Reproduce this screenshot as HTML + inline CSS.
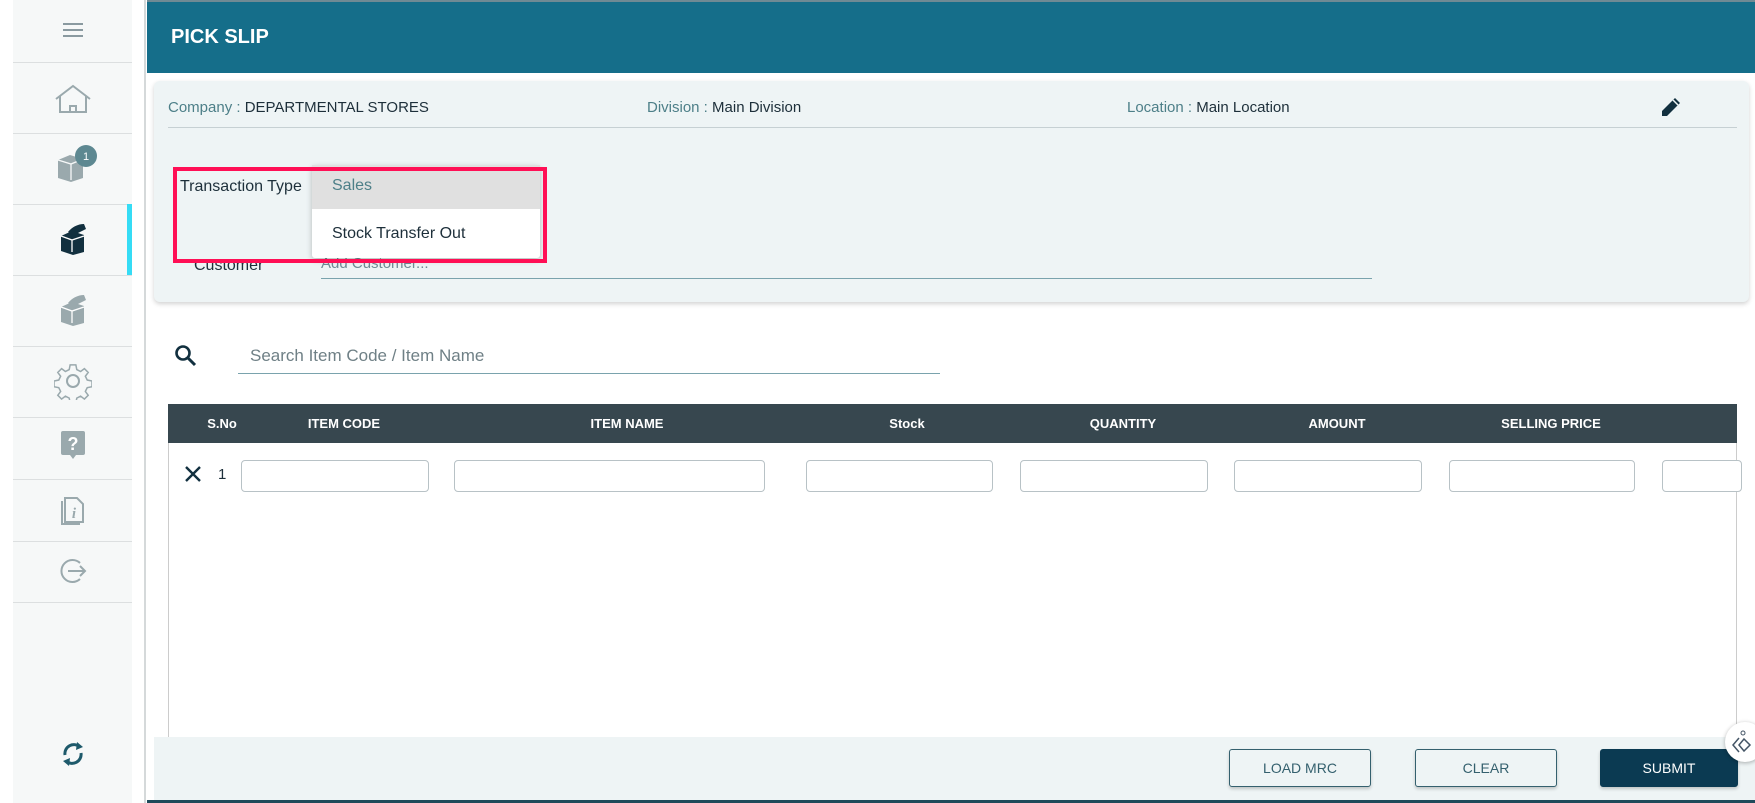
<!DOCTYPE html>
<html><head><meta charset="utf-8"><style>
*{box-sizing:border-box;margin:0;padding:0}
body{width:1755px;height:803px;overflow:hidden;background:#fff;font-family:"Liberation Sans",Arial,sans-serif;position:relative;color:#1d2f3a}
.abs{position:absolute}
.side{left:0;top:0;width:146px;height:803px;background:#fff;border-right:2px solid #d5d9da}
.sbg{left:13px;top:0;width:119px;height:803px;background:#f6f8f8}
.div{left:13px;width:119px;height:1px;background:#dcdfe0}
.ico{left:73px;transform:translate(-50%,-50%)}
.hdr{left:147px;top:0;width:1608px;height:73px;background:#156e8a;border-top:2px solid #6f8a94}
.hdr span{position:absolute;left:24px;top:24px;color:#fff;font-weight:bold;font-size:20px}
.card{left:154px;top:81px;width:1595px;height:221px;background:#eef4f5;border-radius:6px;box-shadow:0 2px 5px rgba(0,0,0,.18)}
.lbl{color:#4d7f88;font-size:15px}
.val{color:#1d2f3a;font-size:15px}
.th{top:404px;height:39px;background:#37474f;left:168px;width:1569px}
.th div{position:absolute;top:12px;color:#fff;font-weight:bold;font-size:13px;transform:translateX(-50%);white-space:nowrap}
.inp{top:460px;height:32px;border:1px solid #b8c2c6;border-radius:4px;background:#fff}
.btn{top:749px;height:38px;border:1px solid #34606e;border-radius:3px;background:#eef4f5;color:#34606e;font-size:14px;text-align:center;line-height:36px;box-shadow:0 2px 3px rgba(0,0,0,.2)}
</style></head><body>
<div class="abs side"></div><div class="abs sbg"></div>
<div class="abs div" style="top:62px"></div><div class="abs div" style="top:133px"></div><div class="abs div" style="top:204px"></div><div class="abs div" style="top:275px"></div><div class="abs div" style="top:346px"></div><div class="abs div" style="top:417px"></div><div class="abs div" style="top:479px"></div><div class="abs div" style="top:541px"></div><div class="abs div" style="top:602px"></div>
<div class="abs" style="left:127px;top:204px;width:5px;height:71px;background:#35dcf5"></div>
<svg class="abs ico" style="top:30px" width="22" height="16"><path d="M1 2h20M1 8h20M1 14h20" stroke="#8a9aa0" stroke-width="2"/></svg>
<svg class="abs ico" style="top:99px" width="40" height="30"><path d="M3 15L20 2L37 15M7 12v16h26V12M17 28v-6h6v6" stroke="#9aa9ad" stroke-width="2" fill="none"/></svg>
<svg class="abs ico" style="top:164px;left:78px" width="44" height="40"><path d="M2 16l12-5 13 4v19l-12 4-13-4z" fill="#9aa9ad"/><path d="M15 20v16M2 16l13 4 12-5" stroke="#f6f8f8" stroke-width="1.3" fill="none"/><circle cx="30" cy="12" r="11" fill="#5d8891"/><text x="30" y="16" fill="#fff" font-size="11" text-anchor="middle" font-family="Liberation Sans">1</text></svg>
<svg class="abs ico" style="top:239px" width="30" height="34"><path d="M3 14l11-5 12 4v17l-11 3-12-4z" fill="#12303f"/><path d="M10 10c4-5 10-8 16-8l2 5-12 6z" fill="#12303f"/><path d="M14 18v12M3 14l11 4 12-4" stroke="#fff" stroke-width="1.3" fill="none"/></svg>
<svg class="abs ico" style="top:310px" width="30" height="34"><path d="M3 14l11-5 12 4v17l-11 3-12-4z" fill="#9aa9ad"/><path d="M10 10c4-5 10-8 16-8l2 5-12 6z" fill="#9aa9ad"/><path d="M14 18v12M3 14l11 4 12-4" stroke="#fff" stroke-width="1.3" fill="none"/></svg>
<svg class="abs ico" style="top:381px" width="38" height="38"><circle cx="19" cy="19" r="6" stroke="#9aa9ad" stroke-width="2" fill="none"/><path d="M16 3h6l1 5 4 2 4-3 4 4-3 4 2 4 5 1v6l-5 1-2 4 3 4-4 4-4-3-4 2-1 5h-6l-1-5-4-2-4 3-4-4 3-4-2-4-5-1v-6l5-1 2-4-3-4 4-4 4 3 4-2z" transform="scale(.95) translate(1 0)" stroke="#9aa9ad" stroke-width="1.6" fill="none"/></svg>
<svg class="abs ico" style="top:445px" width="26" height="30"><rect x="1" y="1" width="24" height="24" rx="2" fill="#9aa9ad"/><path d="M10 25l3 4 3-4z" fill="#9aa9ad"/><text x="13" y="20" fill="#fff" font-size="18" font-weight="bold" text-anchor="middle" font-family="Liberation Sans">?</text></svg>
<svg class="abs ico" style="top:510px" width="28" height="32"><path d="M6 4h12l6 6v18H6z" stroke="#9aa9ad" stroke-width="2" fill="none"/><path d="M3 7v23h18" stroke="#9aa9ad" stroke-width="2" fill="none"/><text x="15" y="24" fill="#9aa9ad" font-size="15" font-style="italic" font-weight="bold" text-anchor="middle" font-family="Liberation Serif">i</text></svg>
<svg class="abs ico" style="top:571px" width="30" height="30"><path d="M22 7A11 11 0 1 0 22 23" stroke="#9aa9ad" stroke-width="2" fill="none"/><path d="M10 15h17M22 10l5 5-5 5" stroke="#9aa9ad" stroke-width="2" fill="none"/></svg>
<svg class="abs ico" style="top:754px" width="26" height="28"><path d="M5 15A9 9 0 0 1 20 7M21 13A9 9 0 0 1 6 21" stroke="#1e5a6b" stroke-width="3" fill="none"/><path d="M17 2l6 5-7 3zM9 26l-6-5 7-3z" fill="#1e5a6b"/></svg>

<div class="abs hdr"><span>PICK SLIP</span></div>
<div class="abs card"></div>
<div class="abs" style="left:168px;top:99px"><span class="lbl">Company : </span><span class="val">DEPARTMENTAL STORES</span></div>
<div class="abs" style="left:647px;top:99px"><span class="lbl">Division : </span><span class="val">Main Division</span></div>
<div class="abs" style="left:1127px;top:99px"><span class="lbl">Location : </span><span class="val">Main Location</span></div>
<svg class="abs" style="left:1660px;top:96px" width="22" height="22"><path d="M2 20v-5L15 2l5 5L7 20z" fill="#12303f"/><path d="M13 4l5 5" stroke="#eef4f5" stroke-width="1.5"/></svg>
<div class="abs" style="left:168px;top:127px;width:1569px;height:1px;background:#c6d0d3"></div>
<div class="abs val" style="left:180px;top:178px;font-size:16px">Transaction Type</div>
<div class="abs val" style="left:194px;top:257px;font-size:16px">Customer</div>
<div class="abs" style="left:321px;top:255px;color:#6f8a94;font-size:15px">Add Customer...</div>
<div class="abs" style="left:321px;top:278px;width:1051px;height:1px;background:#7aa3ad"></div>
<div class="abs" style="left:312px;top:165px;width:228px;height:93px;background:#fff;border-radius:3px;box-shadow:0 2px 6px rgba(0,0,0,.25)"></div>
<div class="abs" style="left:312px;top:165px;width:228px;height:44px;background:#e0e0e0"></div>
<div class="abs" style="left:332px;top:177px;color:#4d7f88;font-size:16px">Sales</div>
<div class="abs val" style="left:332px;top:225px;font-size:16px">Stock Transfer Out</div>
<div class="abs" style="left:173px;top:167px;width:374px;height:96px;border:4px solid #ff0f55"></div>

<svg class="abs" style="left:174px;top:344px" width="24" height="24"><circle cx="9" cy="9" r="6.5" stroke="#12303f" stroke-width="2.6" fill="none"/><path d="M14 14l7 7" stroke="#12303f" stroke-width="3"/></svg>
<div class="abs" style="left:250px;top:346px;color:#6f8086;font-size:17px">Search Item Code / Item Name</div>
<div class="abs" style="left:238px;top:373px;width:702px;height:1px;background:#7aa3ad"></div>

<div class="abs" style="left:168px;top:404px;width:1569px;height:334px;background:#fff;border-left:1px solid #ccc;border-right:1px solid #ccc"></div>
<div class="abs th">
<div style="left:54px">S.No</div><div style="left:176px">ITEM CODE</div><div style="left:459px">ITEM NAME</div><div style="left:739px">Stock</div><div style="left:955px">QUANTITY</div><div style="left:1169px">AMOUNT</div><div style="left:1383px">SELLING PRICE</div>
</div>
<svg class="abs" style="left:184px;top:465px" width="18" height="18"><path d="M2 2l14 14M16 2L2 16" stroke="#12303f" stroke-width="2.4"/></svg>
<div class="abs val" style="left:218px;top:466px;font-size:15px">1</div>
<div class="abs inp" style="left:241px;width:188px"></div>
<div class="abs inp" style="left:454px;width:311px"></div>
<div class="abs inp" style="left:806px;width:187px"></div>
<div class="abs inp" style="left:1020px;width:188px"></div>
<div class="abs inp" style="left:1234px;width:188px"></div>
<div class="abs inp" style="left:1449px;width:186px"></div>
<div class="abs inp" style="left:1662px;width:80px"></div>

<div class="abs" style="left:154px;top:737px;width:1601px;height:63px;background:#eef4f5"></div>
<div class="abs" style="left:147px;top:800px;width:1608px;height:3px;background:#1e4a5a"></div>
<div class="abs btn" style="left:1229px;width:142px">LOAD MRC</div>
<div class="abs btn" style="left:1415px;width:142px">CLEAR</div>
<div class="abs btn" style="left:1600px;width:138px;background:#0b3a52;color:#fff;border-color:#0b3a52">SUBMIT</div>
<div class="abs" style="left:1725px;top:722px;width:40px;height:40px;border-radius:50%;background:#fff;box-shadow:0 1px 4px rgba(0,0,0,.3)"></div>
<svg class="abs" style="left:1731px;top:730px" width="22" height="24"><circle cx="12" cy="3" r="2" stroke="#456" fill="none"/><path d="M8 8l-6 7 6 7M13 9l6 6-6 6-5-6z" stroke="#456" stroke-width="1.5" fill="none"/></svg>
</body></html>
